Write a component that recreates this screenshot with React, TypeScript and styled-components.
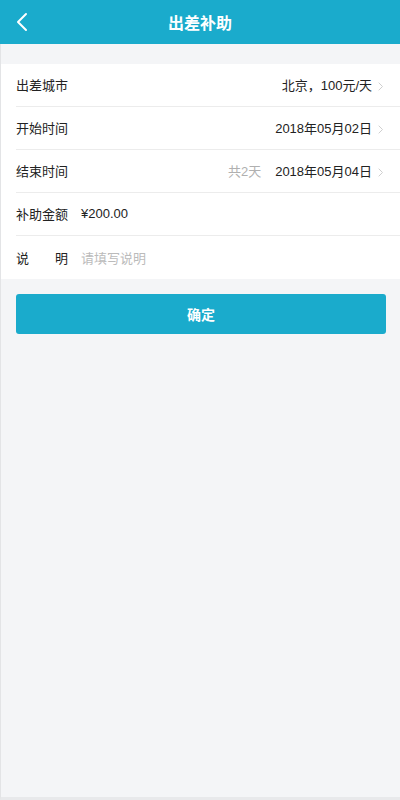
import React from "react";
import styled, { createGlobalStyle } from "styled-components";

const Global = createGlobalStyle`
  html, body { margin: 0; padding: 0; background: #f4f5f7; }
  body { font-family: "Helvetica Neue", "Liberation Sans", "Noto Sans CJK SC", sans-serif; }
  * { box-sizing: border-box; }
`;

const Page = styled.div`
  width: 400px;
  height: 800px;
  display: flex;
  flex-direction: column;
  background: #f4f5f7;
`;

const Header = styled.header`
  height: 44px;
  flex: none;
  background: #1aabcc;
  display: flex;
  align-items: center;
  justify-content: center;
  position: relative;
`;

const BackButton = styled.button`
  position: absolute;
  left: 8px;
  top: 8px;
  width: 28px;
  height: 28px;
  padding: 0;
  border: none;
  background: transparent;
  display: flex;
  align-items: center;
  justify-content: center;
`;

const Title = styled.h1`
  margin: 0;
  color: #fff;
  font-size: 16px;
  font-weight: bold;
`;

const Body = styled.main`
  flex: 1;
  border-left: 1px solid #e3e4e6;
  border-bottom: 3px solid #e8e9eb;
  padding-top: 20px;
  display: flex;
  flex-direction: column;
`;

const Form = styled.section`
  background: #fff;
  padding-left: 15px;
`;

const Row = styled.div<{ $last?: boolean }>`
  height: 43px;
  display: flex;
  align-items: center;
  padding-right: 17px;
  padding-bottom: 1px;
  border-bottom: ${(p) => (p.$last ? "none" : "1px solid #ececec")};
  font-size: 13px;
  color: #222;
`;

const Label = styled.span<{ $spread?: boolean }>`
  width: 52px;
  flex: none;
  display: flex;
  justify-content: ${(p) => (p.$spread ? "space-between" : "flex-start")};
  white-space: nowrap;
`;

const Value = styled.span<{ $placeholder?: boolean }>`
  margin-left: 13px;
  color: ${(p) => (p.$placeholder ? "#bbbbbb" : "#222")};
`;

const Right = styled.div`
  margin-left: auto;
  display: flex;
  align-items: center;
`;

const Hint = styled.span`
  color: #b0b0b0;
  margin-right: 14px;
`;

const Chevron = styled.svg`
  margin-left: 6px;
  margin-top: 3px;
  width: 5px;
  height: 9px;
`;

const ButtonWrap = styled.div`
  padding: 15px 14px 0 15px;
`;

const Submit = styled.button`
  width: 100%;
  height: 40px;
  border: none;
  border-radius: 3px;
  background: #1aabcc;
  color: #fff;
  font-size: 14px;
  font-weight: bold;
  font-family: inherit;
`;

const Arrow = () => (
  <Chevron viewBox="0 0 5 9">
    <path d="M0.7 0.7l3.8 3.8-3.8 3.8" fill="none" stroke="#cfcfcf" strokeWidth="1" />
  </Chevron>
);

export default function App() {
  return (
    <Page>
      <Global />
      <Header>
        <BackButton aria-label="back">
          <svg width="12" height="20" viewBox="0 0 12 20">
            <path d="M10 2L2 10l8 8" fill="none" stroke="#fff" strokeWidth="2" strokeLinecap="round" strokeLinejoin="round" />
          </svg>
        </BackButton>
        <Title>出差补助</Title>
      </Header>
      <Body>
        <Form>
          <Row>
            <Label>出差城市</Label>
            <Right>
              北京，100元/天
              <Arrow />
            </Right>
          </Row>
          <Row>
            <Label>开始时间</Label>
            <Right>
              2018年05月02日
              <Arrow />
            </Right>
          </Row>
          <Row>
            <Label>结束时间</Label>
            <Right>
              <Hint>共2天</Hint>
              2018年05月04日
              <Arrow />
            </Right>
          </Row>
          <Row>
            <Label>补助金额</Label>
            <Value>¥200.00</Value>
          </Row>
          <Row $last>
            <Label $spread>
              <span>说</span>
              <span>明</span>
            </Label>
            <Value $placeholder>请填写说明</Value>
          </Row>
        </Form>
        <ButtonWrap>
          <Submit>确定</Submit>
        </ButtonWrap>
      </Body>
    </Page>
  );
}
